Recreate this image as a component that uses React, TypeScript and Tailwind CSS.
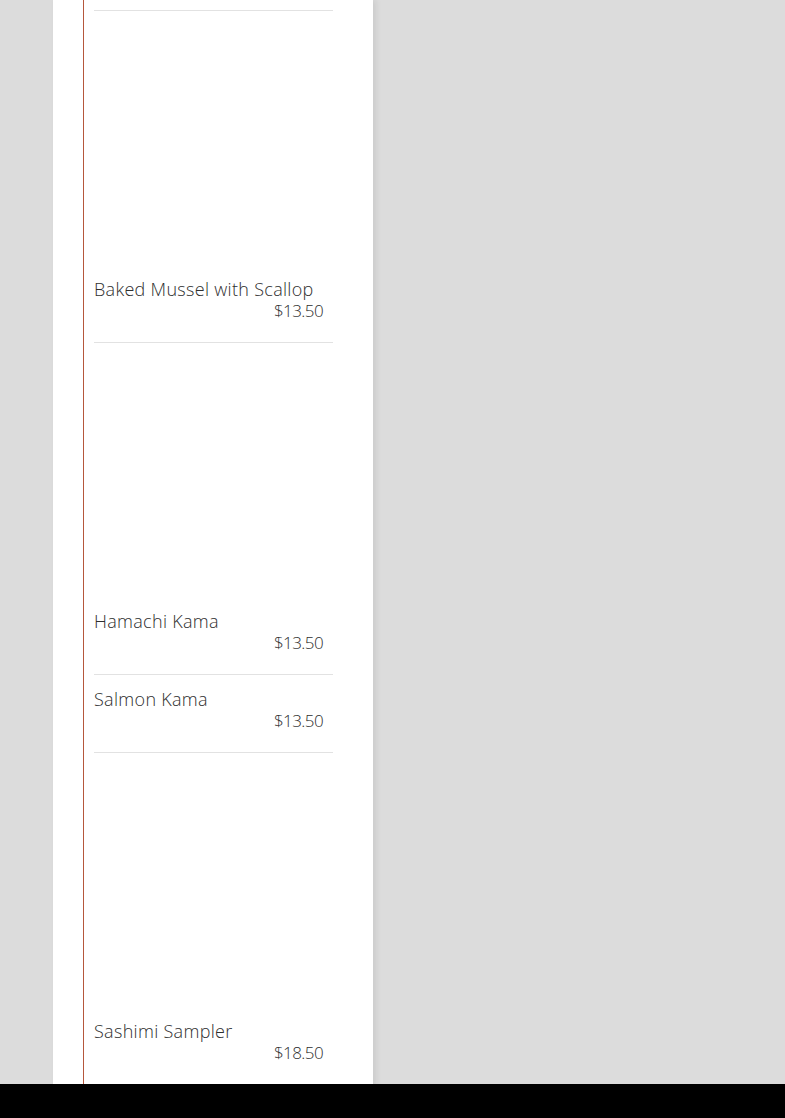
import React from "react";

type Item = { name: string; price: string; image?: boolean };

const items: Item[] = [
  { name: "Baked Mussel with Scallop", price: "$13.50", image: true },
  { name: "Hamachi Kama", price: "$13.50", image: true },
  { name: "Salmon Kama", price: "$13.50" },
  { name: "Sashimi Sampler", price: "$18.50", image: true },
];

export default function App() {
  return (
    <div
      className="relative h-[1118px] w-full overflow-hidden bg-[#dcdcdc]"
      style={{ fontFamily: "'Open Sans', sans-serif" }}
    >
      <div className="ml-[53px] flex min-h-[1118px] w-[320px] bg-white pl-[30px] shadow-[3px_0_6px_rgba(0,0,0,0.08)]">
        <div className="w-px shrink-0 bg-[#b5573c]" />
        <div className="pl-[10px]">
          <div className="h-[11px] w-[239px] border-b border-[#e2e2e2]" />
          {items.map((it) => (
            <div
              key={it.name}
              className="w-[239px] border-b border-[#e2e2e2] pt-[14px] pb-[21px] font-light text-[#2e2e2e]"
            >
              {it.image && <div className="h-[254px] w-full" />}
              <div className="h-[21px] text-[18px] leading-[21px] whitespace-nowrap tracking-[0.3px]">
                {it.name}
              </div>
              <div className="h-[21px] pr-[10px] text-right text-[17px] leading-[21px] tracking-[-0.6px]">
                {it.price}
              </div>
            </div>
          ))}
        </div>
      </div>
      <div className="fixed bottom-0 left-0 h-[34px] w-full bg-black" />
    </div>
  );
}
